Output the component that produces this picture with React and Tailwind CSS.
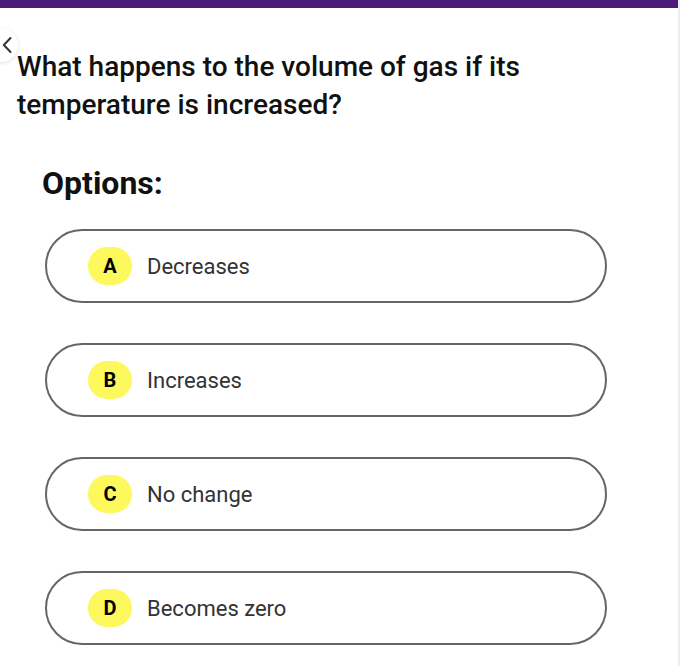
import React from 'react';

const options = [
  { key: 'A', label: 'Decreases' },
  { key: 'B', label: 'Increases' },
  { key: 'C', label: 'No change' },
  { key: 'D', label: 'Becomes zero' },
];

export default function App() {
  return (
    <div className="w-[700px] h-[666px] bg-white flex overflow-hidden" style={{ fontFamily: 'Roboto, "Noto Sans", sans-serif' }}>
      <div className="relative w-[680px] h-full border-r-2 border-[#ededed]">
        <div className="h-2 bg-[#4a1b78]" />

        {/* back button, mostly off screen */}
        <button className="absolute left-[-16px] top-[28px] w-[34px] h-[34px] rounded-full bg-white shadow-[0_1px_4px_rgba(0,0,0,0.12)] flex items-center justify-end pr-[5px]">
          <svg width="12" height="18" viewBox="0 0 12 18" fill="none">
            <path d="M9.5 2L2.8 9l6.7 7" stroke="#333" strokeWidth="2" strokeLinecap="round" strokeLinejoin="round" />
          </svg>
        </button>

        <h1 className="pl-[17px] pr-4 mt-[40px] text-[28px] leading-[38px] font-medium text-[#111]">
          What happens to the volume of gas if its
          <br />
          temperature is increased?
        </h1>

        <h2 className="pl-[42px] mt-[41px] text-[32px] leading-[36px] font-bold text-[#111]">Options:</h2>

        <div className="mt-[28px] ml-[45px] w-[562px] flex flex-col gap-[40px]">
          {options.map((o) => (
            <div key={o.key} className="h-[74px] rounded-full border-2 border-[#666] flex items-center pl-[41px]">
              <span className="w-[44px] h-[38px] rounded-full bg-[#fdf85c] flex items-center justify-center text-[20px] font-bold text-black">
                {o.key}
              </span>
              <span className="ml-[15px] text-[22px] text-[#333]">{o.label}</span>
            </div>
          ))}
        </div>
      </div>
    </div>
  );
}
